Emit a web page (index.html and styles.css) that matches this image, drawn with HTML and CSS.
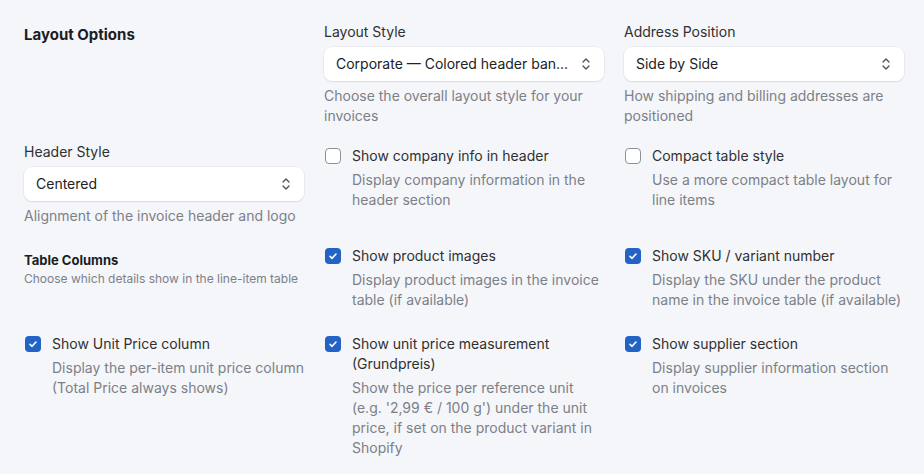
FILE: index.html
```html
<!DOCTYPE html>
<html lang="en">
<head>
  <meta charset="UTF-8" />
  <title>Invoice settings</title>
  <link rel="stylesheet" href="styles.css">
</head>
<body>

  <div class="settings">

    <div class="row row-first">
      <div class="cell">
        <h2 class="section-title">Layout Options</h2>
      </div>
      <div class="cell">
        <label class="field-label">Layout Style</label>
        <div class="select">
          <span class="select-value">Corporate — Colored header ban...</span>
          <svg class="select-arrows" viewBox="0 0 10 14" width="10" height="14"><path d="M2 5 L5 2 L8 5 M2 9 L5 12 L8 9" fill="none" stroke="#4a4f57" stroke-width="1.3" stroke-linecap="round" stroke-linejoin="round"/></svg>
        </div>
        <p class="help">Choose the overall layout style for your invoices</p>
      </div>
      <div class="cell">
        <label class="field-label">Address Position</label>
        <div class="select">
          <span class="select-value">Side by Side</span>
          <svg class="select-arrows" viewBox="0 0 10 14" width="10" height="14"><path d="M2 5 L5 2 L8 5 M2 9 L5 12 L8 9" fill="none" stroke="#4a4f57" stroke-width="1.3" stroke-linecap="round" stroke-linejoin="round"/></svg>
        </div>
        <p class="help">How shipping and billing addresses are positioned</p>
      </div>
    </div>

    <div class="row row-second">
      <div class="cell">
        <label class="field-label">Header Style</label>
        <div class="select">
          <span class="select-value">Centered</span>
          <svg class="select-arrows" viewBox="0 0 10 14" width="10" height="14"><path d="M2 5 L5 2 L8 5 M2 9 L5 12 L8 9" fill="none" stroke="#4a4f57" stroke-width="1.3" stroke-linecap="round" stroke-linejoin="round"/></svg>
        </div>
        <p class="help">Alignment of the invoice header and logo</p>
      </div>
      <div class="cell check-cell">
        <div class="check">
          <span class="box"></span>
          <span class="check-label">Show company info in header</span>
        </div>
        <p class="help indent">Display company information in the header section</p>
      </div>
      <div class="cell check-cell">
        <div class="check">
          <span class="box"></span>
          <span class="check-label">Compact table style</span>
        </div>
        <p class="help indent">Use a more compact table layout for line items</p>
      </div>
    </div>

    <div class="row row-third">
      <div class="cell sub-head">
        <h3 class="sub-title">Table Columns</h3>
        <p class="sub-help">Choose which details show in the line-item table</p>
      </div>
      <div class="cell">
        <div class="check">
          <span class="box on"><svg viewBox="0 0 16 16" width="16" height="16"><path d="M5 8.3 L7.1 10.3 L11 6" fill="none" stroke="#fff" stroke-width="1.6" stroke-linecap="round" stroke-linejoin="round"/></svg></span>
          <span class="check-label">Show product images</span>
        </div>
        <p class="help indent">Display product images in the invoice table (if available)</p>
      </div>
      <div class="cell">
        <div class="check">
          <span class="box on"><svg viewBox="0 0 16 16" width="16" height="16"><path d="M5 8.3 L7.1 10.3 L11 6" fill="none" stroke="#fff" stroke-width="1.6" stroke-linecap="round" stroke-linejoin="round"/></svg></span>
          <span class="check-label">Show SKU / variant number</span>
        </div>
        <p class="help indent">Display the SKU under the product name in the invoice table (if available)</p>
      </div>
    </div>

    <div class="row row-fourth">
      <div class="cell">
        <div class="check">
          <span class="box on"><svg viewBox="0 0 16 16" width="16" height="16"><path d="M5 8.3 L7.1 10.3 L11 6" fill="none" stroke="#fff" stroke-width="1.6" stroke-linecap="round" stroke-linejoin="round"/></svg></span>
          <span class="check-label">Show Unit Price column</span>
        </div>
        <p class="help indent">Display the per-item unit price column (Total Price always shows)</p>
      </div>
      <div class="cell">
        <div class="check">
          <span class="box on"><svg viewBox="0 0 16 16" width="16" height="16"><path d="M5 8.3 L7.1 10.3 L11 6" fill="none" stroke="#fff" stroke-width="1.6" stroke-linecap="round" stroke-linejoin="round"/></svg></span>
          <span class="check-label">Show unit price measurement (Grundpreis)</span>
        </div>
        <p class="help indent">Show the price per reference unit (e.g. '2,99 € / 100 g') under the unit price, if set on the product variant in Shopify</p>
      </div>
      <div class="cell">
        <div class="check">
          <span class="box on"><svg viewBox="0 0 16 16" width="16" height="16"><path d="M5 8.3 L7.1 10.3 L11 6" fill="none" stroke="#fff" stroke-width="1.6" stroke-linecap="round" stroke-linejoin="round"/></svg></span>
          <span class="check-label">Show supplier section</span>
        </div>
        <p class="help indent">Display supplier information section on invoices</p>
      </div>
    </div>

  </div>

</body>
</html>
```

FILE: styles.css
```css
body {
  margin: 0;
  padding: 0;
  background: #f5f6fa;
  font-family: Inter, "Noto Sans", sans-serif;
  color: #303030;
  -webkit-font-smoothing: antialiased;
}
.settings {
  padding: 22px 20px 0 24px;
}
.row {
  display: grid;
  grid-template-columns: 280px 280px 280px;
  column-gap: 20px;
  align-items: start;
}
.row-second {
  margin-top: 16px;
}
.row-third {
  margin-top: 20px;
}
.row-fourth {
  margin-top: 24px;
}
.check-cell {
  padding-top: 4px;
}

/* titles */
.section-title {
  margin: 3px 0 0;
  font-size: 15px;
  line-height: 20px;
  font-weight: 650;
  color: #1b1d21;
}
.sub-head {
  padding-top: 4px;
}
.sub-title {
  margin: 0;
  font-size: 13px;
  line-height: 20px;
  font-weight: 650;
  color: #1b1d21;
}
.sub-help {
  margin: 0;
  font-size: 12px;
  line-height: 17px;
  color: #7c8087;
}

/* select fields */
.field-label {
  display: block;
  font-size: 14px;
  line-height: 20px;
  color: #303030;
}
.select {
  margin-top: 5px;
  height: 34px;
  box-sizing: border-box;
  padding: 0 12px 1px;
  background: #fff;
  border-radius: 8px;
  box-shadow: 0 1px 2px rgba(0,0,0,0.08), 0 0 0 1px rgba(0,0,0,0.03);
  display: flex;
  align-items: center;
  gap: 12px;
}
.select-value {
  flex: 1;
  min-width: 0;
  font-size: 14px;
  color: #202223;
  white-space: nowrap;
}
.select-arrows {
  flex-shrink: 0;
  margin-right: 1px;
}
.help {
  margin: 5px 0 0;
  font-size: 14px;
  line-height: 20px;
  color: #7c8087;
}
.help.indent {
  margin: 4px 0 0 28px;
}

/* checkboxes */
.check {
  display: flex;
  align-items: flex-start;
  gap: 11px;
}
.box {
  flex-shrink: 0;
  width: 16px;
  height: 16px;
  margin: 2px 0 0 1px;
  box-sizing: border-box;
  border: 1.5px solid #8c9196;
  border-radius: 4px;
  background: #fff;
  display: flex;
}
.box.on {
  border: none;
  background: #2463c6;
}
.check-label {
  font-size: 14px;
  line-height: 20px;
  color: #303030;
}
```
